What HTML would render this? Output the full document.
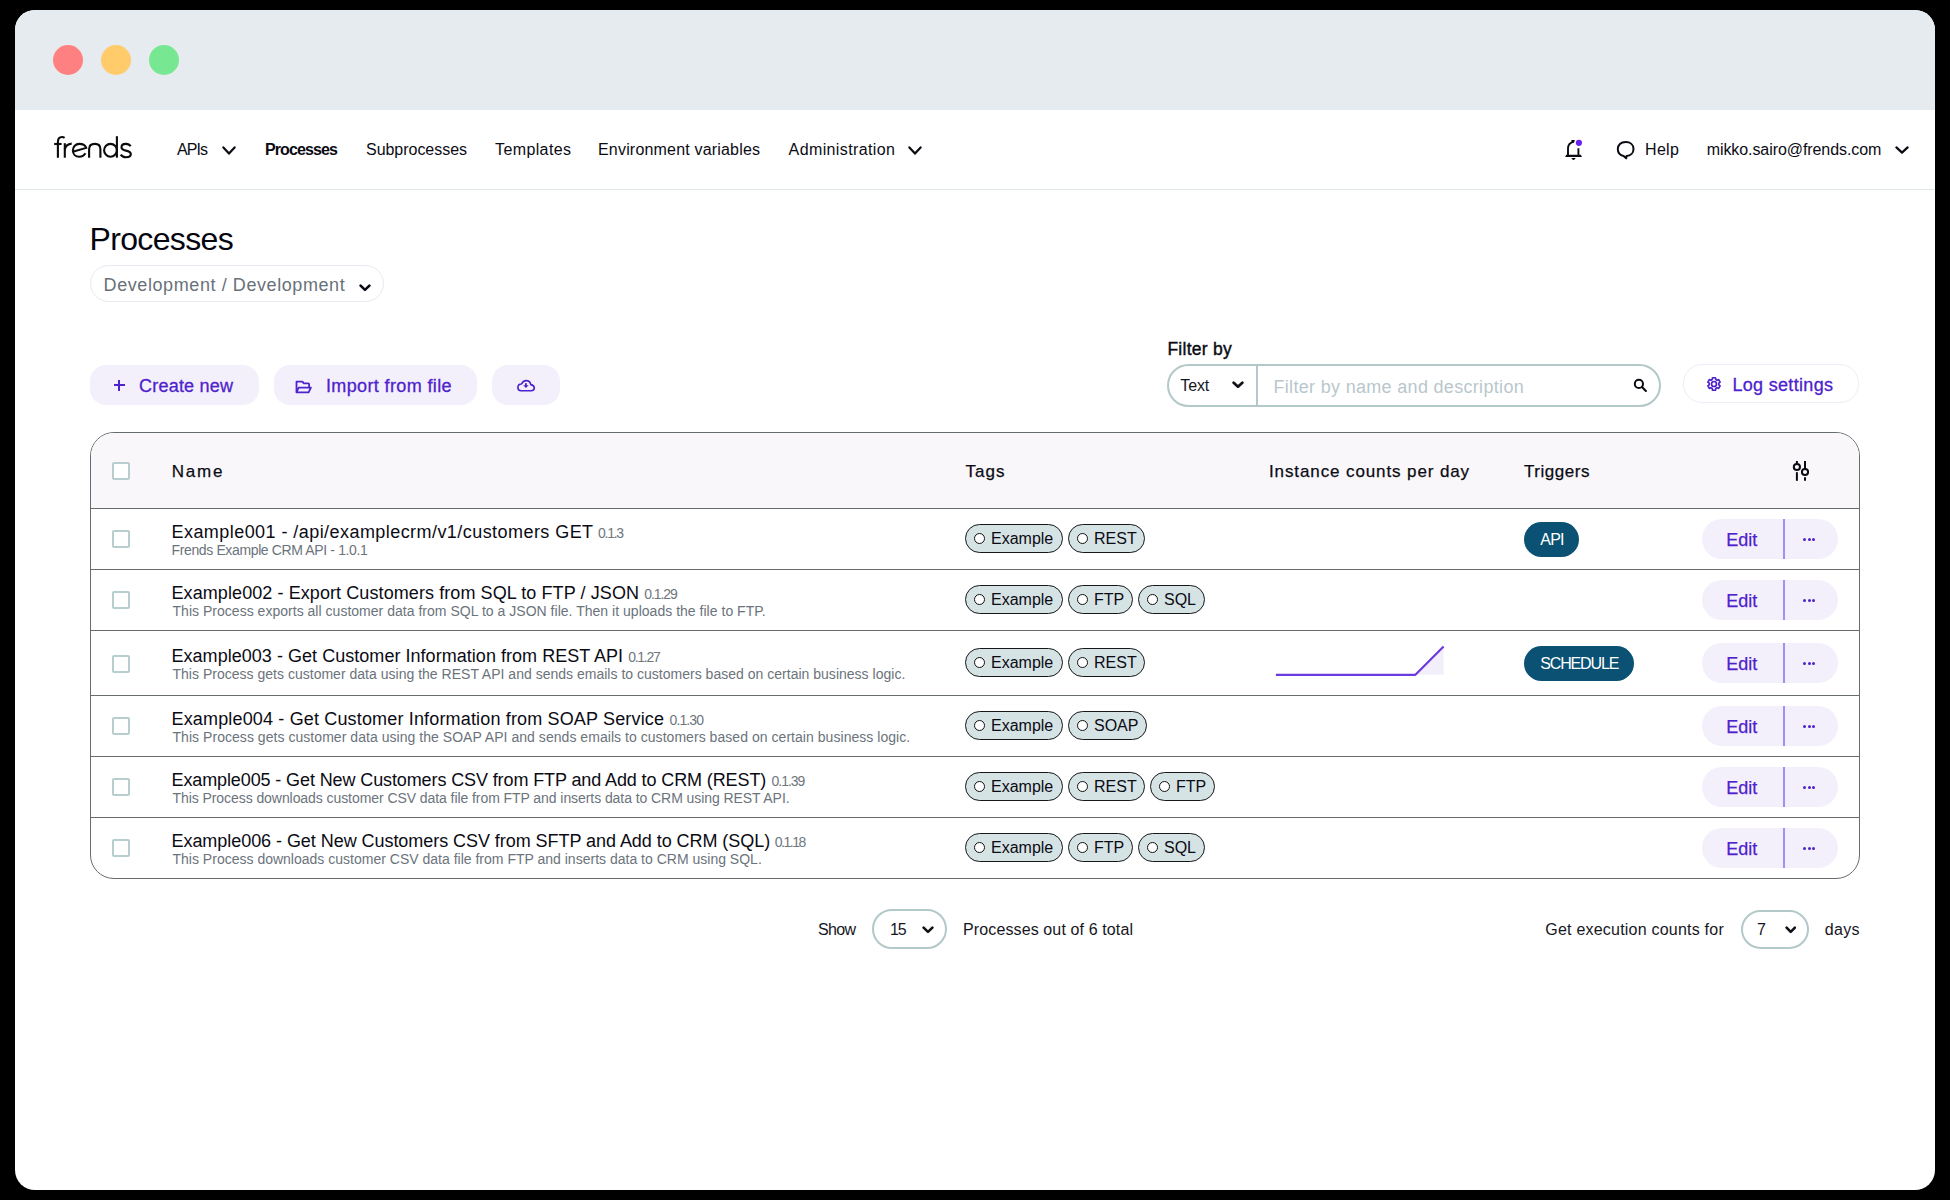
<!DOCTYPE html>
<html><head><meta charset="utf-8"><title>Processes - frends</title><style>
*{margin:0;padding:0;box-sizing:content-box}
html,body{width:1950px;height:1200px;overflow:hidden;background:#000}
body{position:relative;font-family:"Liberation Sans",sans-serif}
.a{position:absolute}
.t{position:absolute;line-height:1;white-space:nowrap}
#win{position:absolute;left:15px;top:10px;width:1920px;height:1180px;background:#fff;border-radius:20px;overflow:hidden}
#titlebar{position:absolute;left:15px;top:10px;width:1920px;height:100px;background:#e6ebef;border-radius:20px 20px 0 0}
#table{position:absolute;left:90px;top:432px;width:1768px;height:445px;border:1px solid #676d6f;border-radius:24px}
.cb{position:absolute;width:14px;height:14px;border:2px solid #b8cdcd;border-radius:2px;background:#fff}
.tag{position:absolute;height:27px;border:1.5px solid #151819;border-radius:15px;background:#d6e3e4;font-size:16px;line-height:28px;white-space:nowrap;color:#0b0b14}
.tag .dot{position:absolute;left:8px;top:7.6px;width:9.2px;height:9.2px;background:#fff;border:1.5px solid #111;border-radius:50%}
.tag .tt{position:absolute;left:25px;top:-0.5px}
</style></head>
<body>
<div id="win"></div>
<div id="titlebar"></div>
<div class="a" style="left:53px;top:45px;width:30px;height:30px;border-radius:50%;background:#ff8080"></div>
<div class="a" style="left:101px;top:45px;width:30px;height:30px;border-radius:50%;background:#ffcb6b"></div>
<div class="a" style="left:149px;top:45px;width:30px;height:30px;border-radius:50%;background:#77e891"></div>
<div class="a" style="left:15px;top:189px;width:1920px;height:1px;background:#dfe7e8"></div>
<svg class="a" style="left:0;top:0" width="150" height="170" viewBox="0 0 150 170">
<g fill="none" stroke="#0b0b0b" stroke-width="2.1">
<path d="M57.9 157.7 L57.9 142 C57.9 138.6 59.6 137 62 137 C63.1 137 63.9 137.3 64.6 137.8"/>
<path d="M54.2 144 L61.6 144"/>
<path d="M64.8 143.2 L64.8 157.7"/>
<path d="M64.8 149.5 C65.4 145.8 68 143.9 71.7 143.6"/>
<path d="M73.6 151.6 L86.2 147.9 C85.3 145 82.6 143.9 79.3 143.9 C75.6 143.9 72.9 146.8 72.9 150.4 C72.9 154 75.6 156.7 79.3 156.7 C82 156.7 84 155.6 85.4 153.2"/>
<path d="M89.1 157.7 L89.1 149.3 C89.1 145.9 91.4 143.9 94.8 143.9 C98.2 143.9 100.4 145.9 100.4 149.3 L100.4 157.7"/>
<path d="M116.9 136.2 L116.9 157.7"/>
<ellipse cx="110.5" cy="150.3" rx="6.4" ry="6.4"/>
<path d="M130.6 146.3 C129.7 144.7 128 143.9 125.9 143.9 C123.3 143.9 121.5 145.2 121.5 147.2 C121.5 149.3 123.3 150 126 150.6 C129 151.2 130.8 152.2 130.8 154.2 C130.8 156.2 128.8 157.2 126 157.2 C123.6 157.2 121.8 156.3 120.7 154.6"/>
</g></svg>
<svg class="a" style="left:222px;top:146px" width="14" height="9" viewBox="0 0 14 9"><path d="M1.4000000000000001 1.4000000000000001 L7.0 7.6000000000000005 L12.6 1.4000000000000001" fill="none" stroke="#0b0b14" stroke-width="2.2" stroke-linecap="round" stroke-linejoin="round"/></svg>
<svg class="a" style="left:908px;top:146px" width="14" height="9" viewBox="0 0 14 9"><path d="M1.4000000000000001 1.4000000000000001 L7.0 7.6000000000000005 L12.6 1.4000000000000001" fill="none" stroke="#0b0b14" stroke-width="2.2" stroke-linecap="round" stroke-linejoin="round"/></svg>
<svg class="a" style="left:1895px;top:146px" width="14" height="8" viewBox="0 0 14 8"><path d="M1.4000000000000001 1.4000000000000001 L7.0 6.6000000000000005 L12.6 1.4000000000000001" fill="none" stroke="#0b0b14" stroke-width="2.2" stroke-linecap="round" stroke-linejoin="round"/></svg>
<svg class="a" style="left:1560px;top:136px" width="28" height="28" viewBox="0 0 28 28">
<path d="M13.6 5.6 C10.2 6.6 8 8.8 8 12.4 L8 19.2" fill="none" stroke="#0b0b14" stroke-width="1.9"/>
<path d="M11.3 4.1 L14.9 4.1 L14.1 6.5 L12 7 Z" fill="#0b0b14"/>
<path d="M18.4 12.3 L18.4 19.2" fill="none" stroke="#0b0b14" stroke-width="1.9"/>
<path d="M6.2 18.8 L20.9 18.8 L21.9 20.9 L5.2 20.9 Z" fill="#0b0b14"/>
<path d="M11.4 22.1 L15.6 22.1 C15.2 23.3 14.4 23.9 13.5 23.9 C12.6 23.9 11.8 23.3 11.4 22.1 Z" fill="#0b0b14"/>
<circle cx="18.9" cy="6.8" r="3.1" fill="#6a1ff5"/></svg>
<svg class="a" style="left:1610px;top:135px" width="30" height="30" viewBox="0 0 30 30">
<path d="M13.6 20.9 C9.6 20.3 7.8 17.6 7.8 14.1 C7.8 9.8 10.8 7.1 15.6 7.1 C20.4 7.1 23.5 9.8 23.5 14 C23.5 18 20.6 20.8 16.6 20.9 L16.2 23.3 Z" fill="none" stroke="#0b0b14" stroke-width="2" stroke-linejoin="round"/></svg>
<div class="a" style="left:90px;top:265px;width:292px;height:34.5px;border:1.6px solid #e9e9f1;border-radius:20px"></div>
<svg class="a" style="left:359px;top:284px" width="12" height="7.5" viewBox="0 0 12 7.5"><path d="M1.6 1.6 L6.0 5.9 L10.399999999999999 1.6" fill="none" stroke="#0b0b14" stroke-width="2.6" stroke-linecap="round" stroke-linejoin="round"/></svg>
<div class="a" style="left:90px;top:365px;width:169px;height:40px;background:#f3f0fb;border-radius:16px"></div>
<div class="a" style="left:274px;top:365px;width:203px;height:40px;background:#f3f0fb;border-radius:16px"></div>
<div class="a" style="left:492px;top:365px;width:68px;height:40px;background:#f3f0fb;border-radius:16px"></div>
<div class="a" style="left:113.8px;top:384.3px;width:10.9px;height:1.8px;background:#4e22cc"></div>
<div class="a" style="left:118.3px;top:380px;width:1.9px;height:11px;background:#4e22cc"></div>
<svg class="a" style="left:290px;top:374px" width="26" height="24" viewBox="0 0 26 24">
<path d="M6.5 18.3 L6.5 7.7 L12.6 7.7 L13.6 9.3 L18.3 9.3 Q19.1 9.3 19.1 10.1 L19.1 13.2" fill="none" stroke="#4e22cc" stroke-width="1.8" stroke-linejoin="round"/>
<path d="M6.5 18.3 L8.6 13.6 L20.9 13.6 L18.6 18.3 Z" fill="none" stroke="#4e22cc" stroke-width="1.8" stroke-linejoin="round"/></svg>
<svg class="a" style="left:512px;top:372px" width="28" height="26" viewBox="0 0 28 26">
<path d="M9 18.7 C7.2 18.7 5.9 17.3 5.9 15.5 C5.9 13.6 7.4 12 9.5 12 C10.5 9.8 12 8.6 14.2 8.6 C16.7 8.6 18.4 10.3 18.8 12.6 C20.8 13 22.3 14.3 22.3 16.1 C22.3 17.7 21 18.7 19.3 18.7 Z" fill="none" stroke="#4e22cc" stroke-width="1.6" stroke-linejoin="round"/>
<path d="M13.9 11.2 L13.9 14.2" stroke="#4e22cc" stroke-width="1.9"/><path d="M11.2 13.3 L16.6 13.3 L13.9 16.1 Z" fill="#4e22cc"/></svg>
<div class="a" style="left:1167px;top:364px;width:490px;height:39px;border:2px solid #b3c8c8;border-radius:22px"></div>
<div class="a" style="left:1256px;top:366px;width:2px;height:39px;background:#b3c8c8"></div>
<svg class="a" style="left:1232px;top:381px" width="12" height="7.3" viewBox="0 0 12 7.3"><path d="M1.6500000000000001 1.6500000000000001 L6.0 5.6499999999999995 L10.35 1.6500000000000001" fill="none" stroke="#111118" stroke-width="2.7" stroke-linecap="round" stroke-linejoin="round"/></svg>
<svg class="a" style="left:1631px;top:376px" width="18" height="18" viewBox="0 0 18 18">
<circle cx="7.9" cy="7.9" r="4.1" fill="none" stroke="#0b0b14" stroke-width="2"/><path d="M11 11 L14.9 14.9" stroke="#0b0b14" stroke-width="2.1" stroke-linecap="round"/></svg>
<div class="a" style="left:1683px;top:364px;width:174px;height:37px;border:1.8px solid #eeecf7;border-radius:19px"></div>
<svg class="a" style="left:1702px;top:372.3px" width="24" height="24" viewBox="0 0 24 24">
<path d="M13.76 7.43 L13.44 5.76 L10.56 5.76 L10.24 7.43 L8.92 8.19 L7.32 7.64 L5.88 10.13 L7.16 11.23 L7.16 12.77 L5.88 13.87 L7.32 16.36 L8.92 15.81 L10.24 16.57 L10.56 18.24 L13.44 18.24 L13.76 16.57 L15.08 15.81 L16.68 16.36 L18.12 13.87 L16.84 12.77 L16.84 11.23 L18.12 10.13 L16.68 7.64 L15.08 8.19 Z" fill="none" stroke="#4e22cc" stroke-width="1.7" stroke-linejoin="round"/>
<circle cx="12" cy="12" r="2.5" fill="none" stroke="#4e22cc" stroke-width="1.7"/></svg>
<div id="table"></div>
<div class="a" style="left:91px;top:433px;width:1768px;height:75px;background:#f9f7fa;border-radius:23px 23px 0 0"></div>
<div class="a" style="left:91px;top:508px;width:1768px;height:1px;background:#676d6f"></div>
<div class="a" style="left:91px;top:569px;width:1768px;height:1px;background:#676d6f"></div>
<div class="a" style="left:91px;top:630px;width:1768px;height:1px;background:#676d6f"></div>
<div class="a" style="left:91px;top:695px;width:1768px;height:1px;background:#676d6f"></div>
<div class="a" style="left:91px;top:756px;width:1768px;height:1px;background:#676d6f"></div>
<div class="a" style="left:91px;top:817px;width:1768px;height:1px;background:#676d6f"></div>
<div class="cb" style="left:112px;top:462px"></div>
<div class="cb" style="left:112px;top:530px"></div>
<div class="cb" style="left:112px;top:591px"></div>
<div class="cb" style="left:112px;top:655px"></div>
<div class="cb" style="left:112px;top:717px"></div>
<div class="cb" style="left:112px;top:778px"></div>
<div class="cb" style="left:112px;top:839px"></div>
<svg class="a" style="left:1786px;top:456px" width="30" height="30" viewBox="0 0 30 30">
<g fill="none" stroke="#0b0b14" stroke-width="2">
<path d="M10.9 5 L10.9 7.9"/><circle cx="10.9" cy="11" r="3.1"/><path d="M10.9 16.2 L10.9 24.8"/>
<path d="M19 5 L19 12.9"/><circle cx="19" cy="16" r="3.1"/><path d="M19 21.2 L19 24.8"/>
</g></svg>
<div class="tag" style="left:965px;top:524px;width:96px"><span class="dot"></span><span class="tt">Example</span></div>
<div class="tag" style="left:1068px;top:524px;width:75px"><span class="dot"></span><span class="tt">REST</span></div>
<div class="tag" style="left:965px;top:585px;width:96px"><span class="dot"></span><span class="tt">Example</span></div>
<div class="tag" style="left:1068px;top:585px;width:63px"><span class="dot"></span><span class="tt">FTP</span></div>
<div class="tag" style="left:1138px;top:585px;width:65px"><span class="dot"></span><span class="tt">SQL</span></div>
<div class="tag" style="left:965px;top:648px;width:96px"><span class="dot"></span><span class="tt">Example</span></div>
<div class="tag" style="left:1068px;top:648px;width:75px"><span class="dot"></span><span class="tt">REST</span></div>
<div class="tag" style="left:965px;top:711px;width:96px"><span class="dot"></span><span class="tt">Example</span></div>
<div class="tag" style="left:1068px;top:711px;width:77px"><span class="dot"></span><span class="tt">SOAP</span></div>
<div class="tag" style="left:965px;top:772px;width:96px"><span class="dot"></span><span class="tt">Example</span></div>
<div class="tag" style="left:1068px;top:772px;width:75px"><span class="dot"></span><span class="tt">REST</span></div>
<div class="tag" style="left:1150px;top:772px;width:63px"><span class="dot"></span><span class="tt">FTP</span></div>
<div class="tag" style="left:965px;top:833px;width:96px"><span class="dot"></span><span class="tt">Example</span></div>
<div class="tag" style="left:1068px;top:833px;width:63px"><span class="dot"></span><span class="tt">FTP</span></div>
<div class="tag" style="left:1138px;top:833px;width:65px"><span class="dot"></span><span class="tt">SQL</span></div>
<div class="a" style="left:1524px;top:522px;width:55px;height:35px;border-radius:18px;background:#0b5173"></div>
<div class="a" style="left:1524px;top:646px;width:110px;height:35px;border-radius:18px;background:#0b5173"></div>
<svg class="a" style="left:1270px;top:640px" width="180" height="40" viewBox="0 0 180 40">
<path d="M145.4 34.8 L173.6 6.5 L173.6 34.8 Z" fill="#f2effb"/>
<path d="M5.9 34.8 L145.4 34.8 L173.6 6.5" fill="none" stroke="#6a3be0" stroke-width="2.2" stroke-linejoin="round"/></svg>
<div class="a" style="left:1702px;top:519px;width:136px;height:40px;background:#f3f0fb;border-radius:20px"></div>
<div class="a" style="left:1782.5px;top:519px;width:2px;height:40px;background:#a090ef"></div>
<div class="t" style="left:1726.2px;top:530.76px;font-size:18px;color:#4e22cc;letter-spacing:0px;-webkit-text-stroke:0.25px #4e22cc">Edit</div>
<div class="a" style="left:1803.0px;top:538px;width:3.3px;height:3.3px;border-radius:50%;background:#4e22cc"></div>
<div class="a" style="left:1807.6px;top:538px;width:3.3px;height:3.3px;border-radius:50%;background:#4e22cc"></div>
<div class="a" style="left:1812.2px;top:538px;width:3.3px;height:3.3px;border-radius:50%;background:#4e22cc"></div>
<div class="a" style="left:1702px;top:580px;width:136px;height:40px;background:#f3f0fb;border-radius:20px"></div>
<div class="a" style="left:1782.5px;top:580px;width:2px;height:40px;background:#a090ef"></div>
<div class="t" style="left:1726.2px;top:591.76px;font-size:18px;color:#4e22cc;letter-spacing:0px;-webkit-text-stroke:0.25px #4e22cc">Edit</div>
<div class="a" style="left:1803.0px;top:599px;width:3.3px;height:3.3px;border-radius:50%;background:#4e22cc"></div>
<div class="a" style="left:1807.6px;top:599px;width:3.3px;height:3.3px;border-radius:50%;background:#4e22cc"></div>
<div class="a" style="left:1812.2px;top:599px;width:3.3px;height:3.3px;border-radius:50%;background:#4e22cc"></div>
<div class="a" style="left:1702px;top:643px;width:136px;height:40px;background:#f3f0fb;border-radius:20px"></div>
<div class="a" style="left:1782.5px;top:643px;width:2px;height:40px;background:#a090ef"></div>
<div class="t" style="left:1726.2px;top:654.76px;font-size:18px;color:#4e22cc;letter-spacing:0px;-webkit-text-stroke:0.25px #4e22cc">Edit</div>
<div class="a" style="left:1803.0px;top:662px;width:3.3px;height:3.3px;border-radius:50%;background:#4e22cc"></div>
<div class="a" style="left:1807.6px;top:662px;width:3.3px;height:3.3px;border-radius:50%;background:#4e22cc"></div>
<div class="a" style="left:1812.2px;top:662px;width:3.3px;height:3.3px;border-radius:50%;background:#4e22cc"></div>
<div class="a" style="left:1702px;top:706px;width:136px;height:40px;background:#f3f0fb;border-radius:20px"></div>
<div class="a" style="left:1782.5px;top:706px;width:2px;height:40px;background:#a090ef"></div>
<div class="t" style="left:1726.2px;top:717.76px;font-size:18px;color:#4e22cc;letter-spacing:0px;-webkit-text-stroke:0.25px #4e22cc">Edit</div>
<div class="a" style="left:1803.0px;top:725px;width:3.3px;height:3.3px;border-radius:50%;background:#4e22cc"></div>
<div class="a" style="left:1807.6px;top:725px;width:3.3px;height:3.3px;border-radius:50%;background:#4e22cc"></div>
<div class="a" style="left:1812.2px;top:725px;width:3.3px;height:3.3px;border-radius:50%;background:#4e22cc"></div>
<div class="a" style="left:1702px;top:767px;width:136px;height:40px;background:#f3f0fb;border-radius:20px"></div>
<div class="a" style="left:1782.5px;top:767px;width:2px;height:40px;background:#a090ef"></div>
<div class="t" style="left:1726.2px;top:778.76px;font-size:18px;color:#4e22cc;letter-spacing:0px;-webkit-text-stroke:0.25px #4e22cc">Edit</div>
<div class="a" style="left:1803.0px;top:786px;width:3.3px;height:3.3px;border-radius:50%;background:#4e22cc"></div>
<div class="a" style="left:1807.6px;top:786px;width:3.3px;height:3.3px;border-radius:50%;background:#4e22cc"></div>
<div class="a" style="left:1812.2px;top:786px;width:3.3px;height:3.3px;border-radius:50%;background:#4e22cc"></div>
<div class="a" style="left:1702px;top:828px;width:136px;height:40px;background:#f3f0fb;border-radius:20px"></div>
<div class="a" style="left:1782.5px;top:828px;width:2px;height:40px;background:#a090ef"></div>
<div class="t" style="left:1726.2px;top:839.76px;font-size:18px;color:#4e22cc;letter-spacing:0px;-webkit-text-stroke:0.25px #4e22cc">Edit</div>
<div class="a" style="left:1803.0px;top:847px;width:3.3px;height:3.3px;border-radius:50%;background:#4e22cc"></div>
<div class="a" style="left:1807.6px;top:847px;width:3.3px;height:3.3px;border-radius:50%;background:#4e22cc"></div>
<div class="a" style="left:1812.2px;top:847px;width:3.3px;height:3.3px;border-radius:50%;background:#4e22cc"></div>
<div class="a" style="left:872px;top:909px;width:71px;height:36px;border:2px solid #b3c8c8;border-radius:20px"></div>
<svg class="a" style="left:922px;top:926px" width="12" height="7.5" viewBox="0 0 12 7.5"><path d="M1.6 1.6 L6.0 5.9 L10.399999999999999 1.6" fill="none" stroke="#111118" stroke-width="2.6" stroke-linecap="round" stroke-linejoin="round"/></svg>
<div class="a" style="left:1740.5px;top:909.5px;width:64.5px;height:35px;border:2px solid #b3c8c8;border-radius:20px"></div>
<svg class="a" style="left:1784.5px;top:926px" width="11.5" height="7.5" viewBox="0 0 11.5 7.5"><path d="M1.6 1.6 L5.75 5.9 L9.899999999999999 1.6" fill="none" stroke="#111118" stroke-width="2.6" stroke-linecap="round" stroke-linejoin="round"/></svg>
<div class="t" id="apis" style="left:177.00px;top:142.46px;font-size:16px;color:#0b0b14;letter-spacing:-0.930px;">APIs</div>
<div class="t" id="proc" style="left:265.00px;top:141.76px;font-size:16px;color:#0b0b14;letter-spacing:-0.896px;font-weight:700;">Processes</div>
<div class="t" id="subp" style="left:366.00px;top:142.46px;font-size:16px;color:#0b0b14;letter-spacing:-0.036px;">Subprocesses</div>
<div class="t" id="tmpl" style="left:495.00px;top:142.46px;font-size:16px;color:#0b0b14;letter-spacing:0.385px;">Templates</div>
<div class="t" id="env" style="left:598.00px;top:142.46px;font-size:16px;color:#0b0b14;letter-spacing:0.185px;">Environment variables</div>
<div class="t" id="adm" style="left:788.60px;top:142.46px;font-size:16px;color:#0b0b14;letter-spacing:0.379px;">Administration</div>
<div class="t" id="help" style="left:1645.00px;top:142.46px;font-size:16px;color:#0b0b14;letter-spacing:0.331px;">Help</div>
<div class="t" id="mail" style="left:1706.70px;top:142.46px;font-size:16px;color:#0b0b14;letter-spacing:-0.079px;">mikko.sairo@frends.com</div>
<div class="t" id="title" style="left:89.50px;top:222.91px;font-size:32px;color:#050510;letter-spacing:-0.649px;">Processes</div>
<div class="t" id="envsel" style="left:103.60px;top:275.76px;font-size:18px;color:#68717a;letter-spacing:0.583px;">Development / Development</div>
<div class="t" id="create" style="left:139.00px;top:376.76px;font-size:18px;color:#4e22cc;letter-spacing:0.217px;-webkit-text-stroke:0.3px #4e22cc;">Create new</div>
<div class="t" id="import" style="left:326.00px;top:376.76px;font-size:18px;color:#4e22cc;letter-spacing:0.366px;-webkit-text-stroke:0.3px #4e22cc;">Import from file</div>
<div class="t" id="filterby" style="left:1167.40px;top:340.79px;font-size:17.5px;color:#0b0b14;letter-spacing:0.265px;-webkit-text-stroke:0.4px #0b0b14;">Filter by</div>
<div class="t" id="ftext" style="left:1180.30px;top:378.46px;font-size:16px;color:#16161e;letter-spacing:-0.133px;">Text</div>
<div class="t" id="placeholder" style="left:1273.50px;top:377.76px;font-size:18px;color:#b9c7cc;letter-spacing:0.314px;">Filter by name and description</div>
<div class="t" id="logset" style="left:1732.40px;top:375.76px;font-size:18px;color:#4e22cc;letter-spacing:0.321px;-webkit-text-stroke:0.3px #4e22cc;">Log settings</div>
<div class="t" id="h_name" style="left:171.70px;top:462.81px;font-size:17px;color:#0b0b14;letter-spacing:1.802px;-webkit-text-stroke:0.25px #0b0b14;">Name</div>
<div class="t" id="h_tags" style="left:965.50px;top:462.81px;font-size:17px;color:#0b0b14;letter-spacing:1.030px;-webkit-text-stroke:0.25px #0b0b14;">Tags</div>
<div class="t" id="h_inst" style="left:1269.00px;top:462.81px;font-size:17px;color:#0b0b14;letter-spacing:0.891px;-webkit-text-stroke:0.25px #0b0b14;">Instance counts per day</div>
<div class="t" id="h_trig" style="left:1524.00px;top:462.81px;font-size:17px;color:#0b0b14;letter-spacing:0.541px;-webkit-text-stroke:0.25px #0b0b14;">Triggers</div>
<div class="t" id="r0n" style="left:171.50px;top:522.76px;font-size:18px;color:#0b0b14;letter-spacing:0.442px;">Example001 - /api/examplecrm/v1/customers GET</div>
<div class="t" id="r0v" style="left:598.00px;top:526.15px;font-size:14px;color:#6f767c;letter-spacing:-1.263px;">0.1.3</div>
<div class="t" id="r0d" style="left:171.50px;top:543.15px;font-size:14px;color:#6b737b;letter-spacing:-0.367px;">Frends Example CRM API - 1.0.1</div>
<div class="t" id="r1n" style="left:171.50px;top:583.76px;font-size:18px;color:#0b0b14;letter-spacing:0.085px;">Example002 - Export Customers from SQL to FTP / JSON</div>
<div class="t" id="r1v" style="left:644.20px;top:587.15px;font-size:14px;color:#6f767c;letter-spacing:-1.068px;">0.1.29</div>
<div class="t" id="r1d" style="left:172.50px;top:604.15px;font-size:14px;color:#6b737b;letter-spacing:0.022px;">This Process exports all customer data from SQL to a JSON file. Then it uploads the file to FTP.</div>
<div class="t" id="r2n" style="left:171.50px;top:646.76px;font-size:18px;color:#0b0b14;letter-spacing:0.035px;">Example003 - Get Customer Information from REST API</div>
<div class="t" id="r2v" style="left:628.20px;top:650.15px;font-size:14px;color:#6f767c;letter-spacing:-1.268px;">0.1.27</div>
<div class="t" id="r2d" style="left:172.50px;top:667.15px;font-size:14px;color:#6b737b;letter-spacing:0.014px;">This Process gets customer data using the REST API and sends emails to customers based on certain business logic.</div>
<div class="t" id="r3n" style="left:171.50px;top:709.76px;font-size:18px;color:#0b0b14;letter-spacing:0.160px;">Example004 - Get Customer Information from SOAP Service</div>
<div class="t" id="r3v" style="left:669.60px;top:713.15px;font-size:14px;color:#6f767c;letter-spacing:-0.908px;">0.1.30</div>
<div class="t" id="r3d" style="left:172.50px;top:730.15px;font-size:14px;color:#6b737b;letter-spacing:0.044px;">This Process gets customer data using the SOAP API and sends emails to customers based on certain business logic.</div>
<div class="t" id="r4n" style="left:171.50px;top:770.76px;font-size:18px;color:#0b0b14;letter-spacing:-0.111px;">Example005 - Get New Customers CSV from FTP and Add to CRM (REST)</div>
<div class="t" id="r4v" style="left:771.50px;top:774.15px;font-size:14px;color:#6f767c;letter-spacing:-1.008px;">0.1.39</div>
<div class="t" id="r4d" style="left:172.50px;top:791.15px;font-size:14px;color:#6b737b;letter-spacing:-0.069px;">This Process downloads customer CSV data file from FTP and inserts data to CRM using REST API.</div>
<div class="t" id="r5n" style="left:171.50px;top:831.76px;font-size:18px;color:#0b0b14;letter-spacing:-0.050px;">Example006 - Get New Customers CSV from SFTP and Add to CRM (SQL)</div>
<div class="t" id="r5v" style="left:774.80px;top:835.15px;font-size:14px;color:#6f767c;letter-spacing:-1.468px;">0.1.18</div>
<div class="t" id="r5d" style="left:172.50px;top:852.15px;font-size:14px;color:#6b737b;letter-spacing:0.006px;">This Process downloads customer CSV data file from FTP and inserts data to CRM using SQL.</div>
<div class="t" id="show" style="left:818.00px;top:922.46px;font-size:16px;color:#16161e;letter-spacing:-0.656px;">Show</div>
<div class="t" id="n15" style="left:890.00px;top:922.46px;font-size:16px;color:#16161e;letter-spacing:-1.200px;">15</div>
<div class="t" id="pout" style="left:963.00px;top:922.46px;font-size:16px;color:#16161e;letter-spacing:0.120px;">Processes out of 6 total</div>
<div class="t" id="gec" style="left:1545.30px;top:922.46px;font-size:16px;color:#16161e;letter-spacing:0.217px;">Get execution counts for</div>
<div class="t" id="n7" style="left:1757.00px;top:922.46px;font-size:16px;color:#16161e;letter-spacing:0.000px;">7</div>
<div class="t" id="days" style="left:1824.70px;top:922.46px;font-size:16px;color:#16161e;letter-spacing:0.368px;">days</div>
<div class="t" id="edit_api" style="left:1540.30px;top:532.46px;font-size:16px;color:#ffffff;letter-spacing:-0.822px;">API</div>
<div class="t" id="sched" style="left:1540.20px;top:656.46px;font-size:16px;color:#ffffff;letter-spacing:-1.137px;">SCHEDULE</div>
</body></html>
